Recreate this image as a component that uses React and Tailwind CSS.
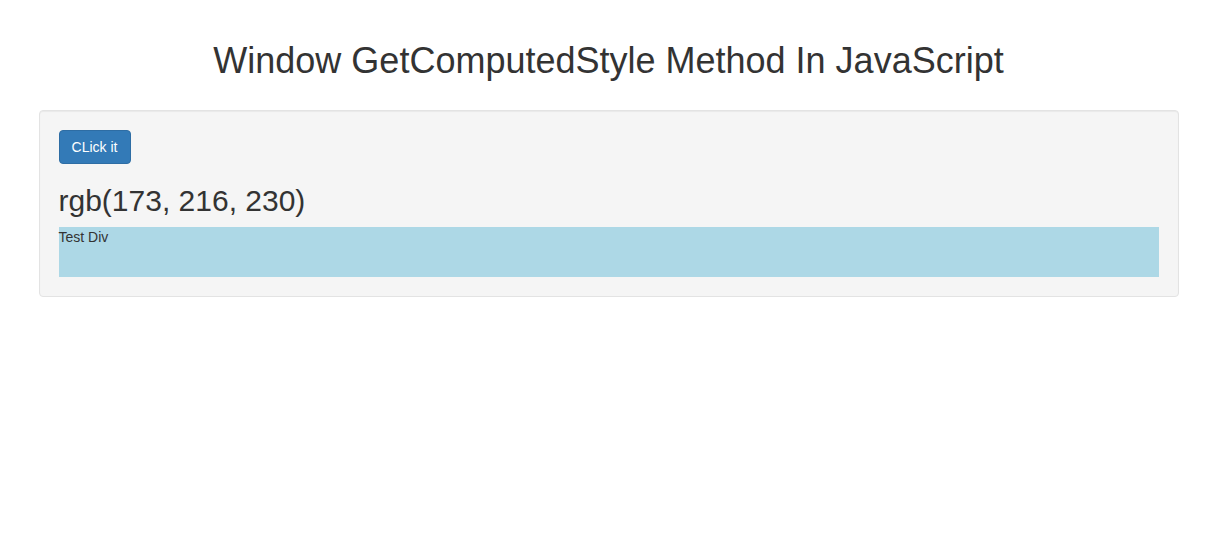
export default function App() {
  return (
    <div className="min-h-screen bg-white text-[#333] font-['Liberation_Sans',Arial,sans-serif]">
      <div className="mx-auto w-[1140px]">
        <h1 className="pt-[41px] pb-[29px] text-center text-[36px] leading-[40px] font-normal">
          Window GetComputedStyle Method In JavaScript
        </h1>
        <div className="rounded-[4px] border border-[#e3e3e3] bg-[#f5f5f5] p-[19px] shadow-[inset_0_1px_1px_rgba(0,0,0,0.05)]">
          <button className="h-[34px] w-[72px] rounded-[4px] border border-[#2e6da4] bg-[#337ab7] text-[14px] leading-[20px] text-white">
            CLick it
          </button>
          <h2 className="mt-5 mb-[10px] text-[30px] leading-[33px] font-normal">rgb(173, 216, 230)</h2>
          <div className="h-[50px] bg-[#add8e6] text-[14px] leading-[20px]">Test Div</div>
        </div>
      </div>
    </div>
  );
}
